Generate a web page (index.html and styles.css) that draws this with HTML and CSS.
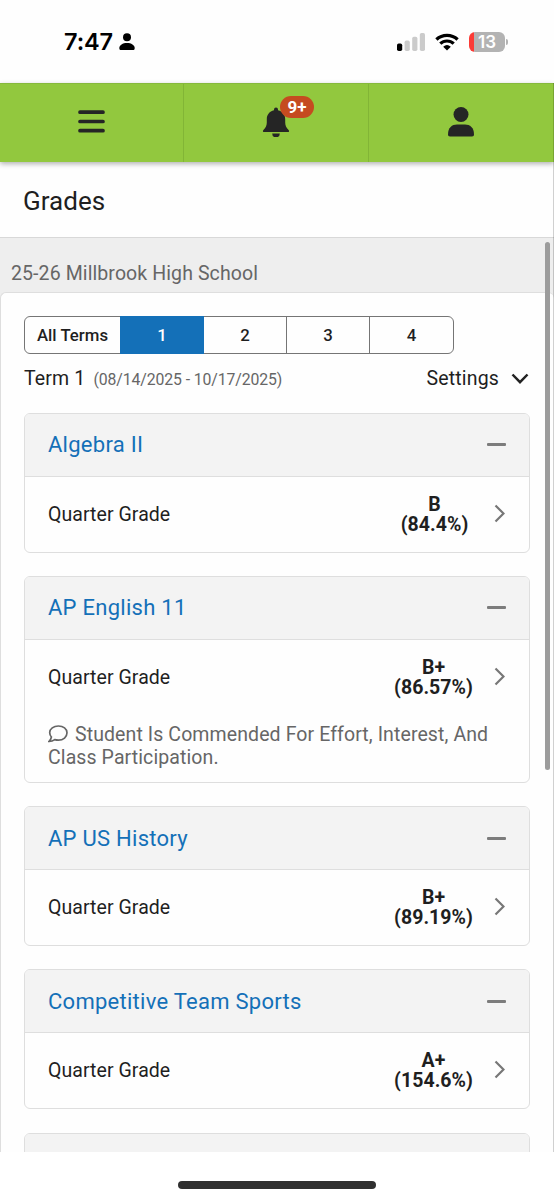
FILE: index.html
```
<!DOCTYPE html>
<html lang="en">
<head>
<meta charset="utf-8">
<title>Grades</title>
<link rel="stylesheet" href="styles.css">
</head>
<body>
<div class="phone">
  <div class="status">
    <div class="clock"><span class="time">7:47</span>
      <svg class="focus" viewBox="0 0 16 18"><circle cx="8" cy="4.3" r="4"/><path d="M.3 15.2C.3 12 3.8 10 8 10s7.700 2 7.700 5.200c0 1.300-.7 1.800-1.900 1.800H2.200C1 17 .3 16.500.3 15.200z"/></svg>
    </div>
    <div class="indicators">
      <svg class="signal" viewBox="0 0 29 18"><rect x="0" y="10.500" width="5.200" height="7.500" rx="1.700"/><g fill="#cbcbcb"><rect x="7.600" y="7.500" width="5.200" height="10.500" rx="1.700"/><rect x="15.200" y="3.800" width="5.200" height="14.200" rx="1.700"/><rect x="22.800" y="0" width="5.200" height="18" rx="1.700"/></g></svg>
      <svg class="wifi" viewBox="0 0 24 18"><path d="M1.400 6.500a15.500 15.500 0 0 1 21.200 0" fill="none" stroke="#000" stroke-width="3.300"/><path d="M5.300 10.700a9.700 9.700 0 0 1 13.400 0" fill="none" stroke="#000" stroke-width="3.200"/><path d="M8.200 13.700a5.700 5.700 0 0 1 7.600 0L12 17.500z"/></svg>
      <div class="battery"><span class="cell">13</span><span class="tip"></span></div>
    </div>
  </div>

  <nav class="navbar">
    <div class="tab"><svg class="menu" viewBox="0 0 27 24"><path d="M2 2.200h23M2 11.500h23M2 20.700h23" stroke="#252525" stroke-width="3.700" stroke-linecap="round"/></svg></div>
    <div class="tab"><div class="alerts"><svg class="bell" viewBox="0 0 28 30"><path d="M12 2.500a2 2 0 0 1 4 0v.8c4.500.9 7.200 4.500 7.200 9v3.200c0 3 1 5 3.400 7.400.9.900.5 2.100-.8 2.100H2.200c-1.300 0-1.700-1.200-.8-2.100 2.400-2.400 3.400-4.400 3.400-7.400v-3.200c0-4.500 2.700-8.100 7.200-9z"/><path d="M10.200 26.500h7.600a3.800 3.800 0 0 1-7.600 0z"/></svg><span class="badge">9+</span></div></div>
    <div class="tab"><svg class="user" viewBox="0 0 26 30"><circle cx="13" cy="7.500" r="7.500"/><path d="M0 27.500C0 20.500 4 17.500 9 17.500h8c5 0 9 3 9 10 0 1.300-.7 2-2 2H2c-1.300 0-2-.7-2-2z"/></svg></div>
  </nav>

  <header class="title">Grades</header>

  <main class="content">
    <div class="school">25-26 Millbrook High School</div>
    <section class="panel">
      <div class="terms">
        <span class="term all">All Terms</span><span class="term active">1</span><span class="term">2</span><span class="term">3</span><span class="term">4</span>
      </div>
      <div class="summary">
        <div><span class="current">Term 1</span><span class="dates">(08/14/2025 - 10/17/2025)</span></div>
        <div class="settings">Settings<svg class="down" viewBox="0 0 18 11"><path d="M1.500 1.500 9 9.200l7.500-7.700"/></svg></div>
      </div>
      <div class="cards">
        <article class="card">
          <div class="course"><span>Algebra II</span><i class="minus"></i></div>
          <div class="row"><span>Quarter Grade</span><div class="score"><span>B</span><span>(84.4%)</span></div><svg class="next" viewBox="0 0 11 19"><path d="m1.500 1.500 8 8-8 8"/></svg></div>
        </article>
        <article class="card">
          <div class="course"><span>AP English 11</span><i class="minus"></i></div>
          <div class="row"><span>Quarter Grade</span><div class="score"><span>B+</span><span>(86.57%)</span></div><svg class="next" viewBox="0 0 11 19"><path d="m1.500 1.500 8 8-8 8"/></svg></div>
          <p class="comment"><svg class="bubble" viewBox="0 0 20 18"><path d="M10.400 1C5.600 1 1.700 3.900 1.700 7.600c0 1.800.6 3.200 1.700 4.400-.3 1.800-1.100 3.100-2.300 4.300 2.200 0 4.100-.6 5.600-1.700 1.100.3 2.400.5 3.700.5 4.900 0 8.600-3.100 8.600-7.300S15.300 1 10.400 1z"/></svg>Student Is Commended For Effort, Interest, And Class Participation.</p>
        </article>
        <article class="card">
          <div class="course"><span>AP US History</span><i class="minus"></i></div>
          <div class="row"><span>Quarter Grade</span><div class="score"><span>B+</span><span>(89.19%)</span></div><svg class="next" viewBox="0 0 11 19"><path d="m1.500 1.500 8 8-8 8"/></svg></div>
        </article>
        <article class="card">
          <div class="course"><span>Competitive Team Sports</span><i class="minus"></i></div>
          <div class="row"><span>Quarter Grade</span><div class="score"><span>A+</span><span>(154.6%)</span></div><svg class="next" viewBox="0 0 11 19"><path d="m1.500 1.500 8 8-8 8"/></svg></div>
        </article>
        <article class="card"><div class="course"></div></article>
      </div>
    </section>
    <div class="scrollbar"></div>
  </main>
  <footer class="home"><div class="home-bar"></div></footer>
  <div class="edge"></div>
</div>
</body>
</html>
```
FILE: styles.css
```
* { box-sizing: border-box; }
body { margin: 0; background: #fff; color: #1f1f1f; font-family: Roboto, "Liberation Sans", sans-serif; }
svg { display: block; flex: none; }
.phone { position: relative; width: 554px; height: 1200px; display: flex; flex-direction: column; overflow: hidden; background: #fefefe; }

.status { height: 83px; flex: none; display: flex; justify-content: space-between; padding: 0 46px 0 64px; }
.clock { display: flex; align-items: center; gap: 6px; font: 600 23.5px/83px Inter, sans-serif; color: #000; }
.time { letter-spacing: -.1px; }
.focus { width: 16px; height: 18px; }
.indicators { display: flex; align-items: center; }
.signal { width: 29px; height: 18px; }
.wifi { width: 24px; height: 18px; margin-left: 9px; }
.battery { display: flex; align-items: center; gap: 1px; margin-left: 10px; }
.cell { width: 36px; height: 20px; border-radius: 6px; background: linear-gradient(90deg, #fb3b36 5px, #b3b3b3 5px); color: #fff; font: 600 17px/20px Inter, sans-serif; text-align: center; }
.tip { width: 2px; height: 6px; border-radius: 0 2px 2px 0; background: #b3b3b3; }

.navbar { position: relative; z-index: 1; height: 79px; flex: none; display: grid; grid-template-columns: 183px 185px 1fr; background: #92c83e; box-shadow: 0 2px 5px rgba(0,0,0,.3); fill: #252525; border-top: 1px solid #86b93c; }
.tab { display: flex; align-items: center; justify-content: center; padding-bottom: 2px; }
.tab + .tab { border-left: 1px solid #82b536; }
.tab:last-child { padding-right: 1px; }
.menu { width: 27px; height: 24px; }
.alerts { position: relative; }
.bell { width: 28px; height: 30px; }
.badge { position: absolute; left: 18px; top: -11px; width: 34px; height: 22px; border-radius: 11px; background: #c54b20; color: #fff; font-weight: 700; font-size: 17px; line-height: 22px; text-align: center; }
.user { width: 26px; height: 30px; }

.title { height: 75px; flex: none; padding-left: 23px; font-size: 26px; line-height: 79px; letter-spacing: .05px; }
.content { position: relative; flex: 1; min-height: 0; overflow: hidden; background: #eee; border-top: 1px solid #d8d8d8; }
.school { height: 54px; padding: 8px 0 0 11px; font-size: 19.500px; line-height: 56px; letter-spacing: .1px; color: #666; }
.panel { height: 900px; border: 1px solid #dedede; border-right: 0; border-radius: 6px; background: #fefefe; padding: 22.500px 24px 0 23px; }
.terms { width: 430px; height: 38px; display: grid; grid-template-columns: 95px 84px 82px 83px 1fr; border: 1px solid #757575; border-radius: 6px; }
.term { text-align: center; font-weight: 500; font-size: 16.800px; line-height: 36px; }
.term + .term { border-left: 1px solid #757575; }
.term.active { margin: -1px 0; border: 0; background: #1470b8; color: #fff; line-height: 38px; }
.active + .term { border-left: 0; }
.summary { height: 59px; display: flex; justify-content: space-between; font-size: 19.500px; line-height: 49px; letter-spacing: .15px; }
.dates { margin-left: 8px; font-size: 15.800px; letter-spacing: -.1px; color: #666; }
.settings { display: flex; align-items: center; gap: 12px; height: 49px; padding-right: 1px; }
.down { width: 18px; height: 11px; fill: none; stroke: #222; stroke-width: 2.500; }

.cards { display: grid; gap: 23.300px; }
.card { border: 1px solid #dedede; border-radius: 6px; overflow: hidden; background: #fefefe; }
.course { height: 63px; display: flex; align-items: center; justify-content: space-between; padding: 0 23px; border-bottom: 1px solid #dedede; background: #f3f3f3; color: #1470b8; font-size: 22px; letter-spacing: .27px; }
.minus { width: 19px; height: 3px; border-radius: 1px; background: #7c7c7c; }
.row { height: 75px; display: flex; align-items: center; padding: 0 24px 0 23px; font-size: 19.500px; letter-spacing: .06px; }
.score { display: flex; flex-direction: column; min-width: 77px; margin: 1px 21px 0 auto; text-align: center; font-weight: 700; line-height: 20px; white-space: nowrap; }
.next { width: 11px; height: 19px; margin-bottom: 2px; fill: none; stroke: #777; stroke-width: 2.200; }
.comment { margin: 0; height: 67px; padding: 8px 23px 0; font-size: 19.500px; line-height: 23px; letter-spacing: .1px; color: #666; }
.bubble { display: inline-block; width: 20px; height: 18px; margin-right: 7px; vertical-align: -2px; fill: none; stroke: #666; stroke-width: 1.700; }
.scrollbar { position: absolute; left: 545px; top: 4px; width: 5px; height: 528px; border-radius: 3px; background: #9c9c9c; }
.edge { position: absolute; right: 0; top: 83px; width: 1px; height: 1069px; background: rgba(0,0,0,.18); z-index: 2; }
.home { height: 48px; flex: none; display: flex; justify-content: center; padding-top: 29px; background: #fff; }
.home-bar { width: 198px; height: 8px; border-radius: 4px; background: #303030; }
```
